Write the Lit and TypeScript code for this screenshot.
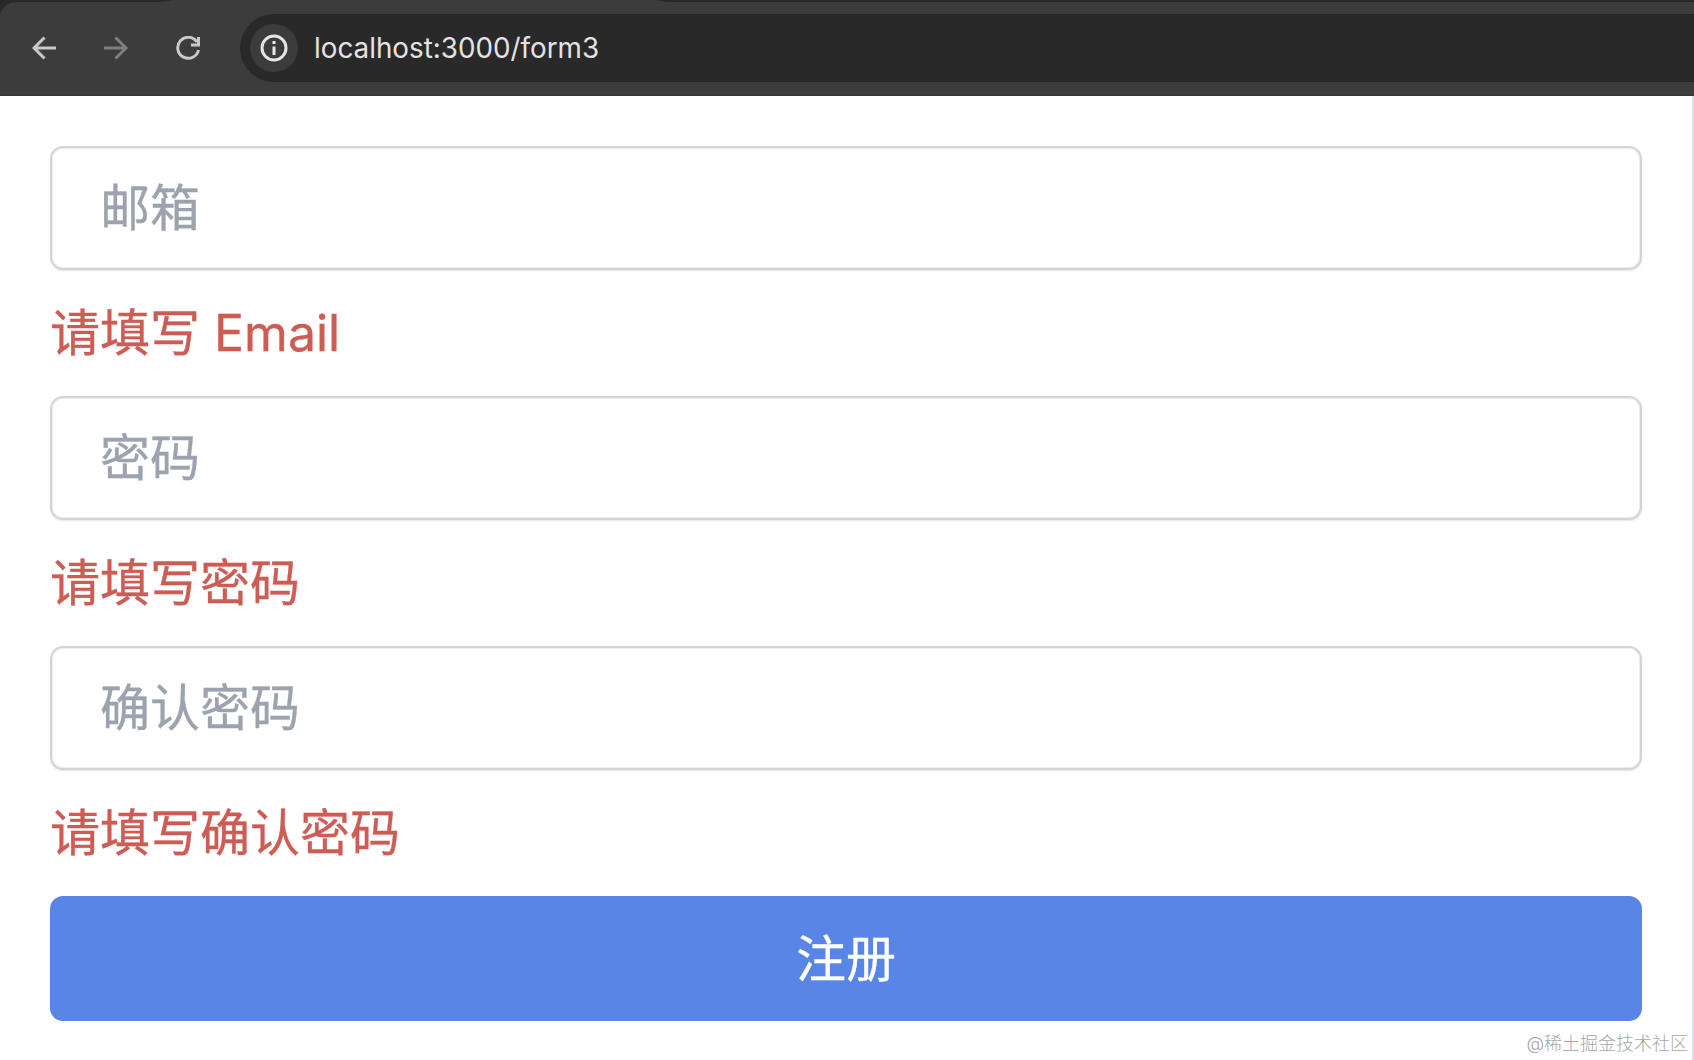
import { LitElement, html, css } from 'lit';
import { customElement } from 'lit/decorators.js';

const FIELDS = [
  { placeholder: '邮箱', type: 'email', error: '请填写 Email' },
  { placeholder: '密码', type: 'password', error: '请填写密码' },
  { placeholder: '确认密码', type: 'password', error: '请填写确认密码' },
];

@customElement('app-root')
export class AppRoot extends LitElement {
  static styles = css`
    :host {
      display: block;
      width: 1694px;
      height: 1060px;
      position: relative;
      overflow: hidden;
      background: #fff;
      font-family: Inter, 'Noto Sans CJK SC', sans-serif;
    }

    .toolbar {
      position: relative;
      box-sizing: border-box;
      height: 96px;
      display: flex;
      align-items: center;
      padding-left: 32px;
      background: #3c3c3c;
      box-shadow: inset 0 -1px 0 #383838;
    }

    .tab-edge {
      position: absolute;
      top: 0;
      left: 0;
      width: 1694px;
      height: 14px;
    }

    .nav {
      display: flex;
      gap: 48px;
      flex: none;
    }

    .nav svg {
      display: block;
      width: 24px;
      height: 24px;
      fill: none;
      stroke-width: 3;
    }

    .back { stroke: #c9c9c9; }
    .forward { stroke: #7f7f7f; }
    .reload { stroke: #c9c9c9; }

    .address {
      flex: 1;
      height: 68px;
      margin-left: 40px;
      padding-left: 10px;
      display: flex;
      align-items: center;
      gap: 16px;
      background: #292929;
      border-radius: 34px 0 0 34px;
    }

    .chip {
      width: 48px;
      height: 48px;
      flex: none;
      display: flex;
      align-items: center;
      justify-content: center;
      border-radius: 50%;
      background: #3c3c3c;
    }

    .chip svg {
      width: 28px;
      height: 28px;
      fill: none;
      stroke: #e6e6e6;
      stroke-width: 3;
    }

    .url {
      font-size: 27.8px;
      color: #e3e3e3;
    }

    .page {
      box-sizing: border-box;
      height: 964px;
      padding: 50px 50px 0 50px;
      display: flex;
      flex-direction: column;
      border-right: 2px solid #d3dff8;
    }

    .field {
      height: 250px;
    }

    input {
      display: block;
      box-sizing: border-box;
      width: 100%;
      height: 124px;
      padding: 0 48px;
      font: inherit;
      font-size: 50px;
      background: #fff;
      border: 2px solid #d1d5db;
      border-radius: 13px;
      box-shadow: 0 1px 2px rgba(0, 0, 0, 0.1), inset 0 0 0 1px rgba(209, 213, 219, 0.4);
      outline: none;
    }

    input::placeholder {
      color: #9ca3af;
      -webkit-text-stroke: 0.35px #9ca3af;
      opacity: 1;
    }

    .error {
      margin-top: 25px;
      font-size: 50px;
      line-height: 76px;
      -webkit-text-stroke: 0.35px currentColor;
      color: #cd5c54;
    }

    button {
      height: 125px;
      padding: 0 0 8px;
      font: inherit;
      font-size: 50px;
      -webkit-text-stroke: 0.35px currentColor;
      color: #fff;
      background: #5885e6;
      border: none;
      border-radius: 13px;
    }

    .watermark {
      position: absolute;
      right: 6px;
      bottom: 5px;
      font-size: 18px;
      line-height: 22px;
      font-weight: 300;
      color: #a6a6a6;
    }
  `;

  protected render() {
    return html`
      <div class="toolbar">
        <svg class="tab-edge" viewBox="0 0 1694 14">
          <path fill="#292929" d="M0 0H172Q166 2 158 2H18Q4 2 0 14Z" />
          <path fill="#292929" d="M1694 0H656Q662 2 670 2H1694Z" />
        </svg>
        <div class="nav">
          <svg class="back" viewBox="0 0 24 24">
            <path d="M24 12H2M12.5 1.5L2 12l10.5 10.500" />
          </svg>
          <svg class="forward" viewBox="0 0 24 24">
            <path d="M0 12h22M11.500 1.500L22 12 11.500 22.500" />
          </svg>
          <svg class="reload" viewBox="0 0 24 24">
            <path d="M21 6A10.500 10.500 0 1 0 22.500 14M22.500 1V9H15" />
          </svg>
        </div>
        <div class="address">
          <span class="chip">
            <svg viewBox="0 0 28 28">
              <circle cx="14" cy="14" r="12" />
              <path d="M14 12.500V21M14 7v3" />
            </svg>
          </span>
          <span class="url">localhost:3000/form3</span>
        </div>
      </div>
      <div class="page">
        ${FIELDS.map(f => html`
          <div class="field">
            <input type=${f.type} placeholder=${f.placeholder} />
            <div class="error">${f.error}</div>
          </div>
        `)}
        <button type="button">注册</button>
      </div>
      <div class="watermark">@稀土掘金技术社区</div>
    `;
  }
}
